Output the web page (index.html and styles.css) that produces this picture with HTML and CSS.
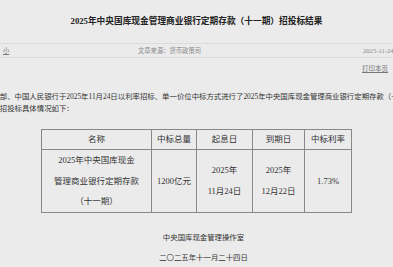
FILE: index.html
```html
<!DOCTYPE html>
<html lang="zh-CN">
<head>
<meta charset="utf-8">
<title>招投标结果</title>
<link rel="stylesheet" href="styles.css">
</head>
<body>
<div class="page">
  <h1 class="title">2025年中央国库现金管理商业银行定期存款（十一期）招投标结果</h1>
  <div class="meta">
    <span class="size"><a class="size-link">小</a></span>
    <span class="source">文章来源：货币政策司</span>
    <span class="date">2025-11-24</span>
  </div>
  <div class="print"><a class="print-link">打印本页</a></div>
  <p class="para">财政部、中国人民银行于2025年11月24日以利率招标、单一价位中标方式进行了2025年中央国库现金管理商业银行定期存款（十一期）招投标。<br>现将招投标具体情况如下：</p>
  <table class="result">
    <colgroup>
      <col class="c1"><col class="c2"><col class="c3"><col class="c4"><col class="c5">
    </colgroup>
    <thead>
      <tr><th>名称</th><th>中标总量</th><th>起息日</th><th>到期日</th><th>中标利率</th></tr>
    </thead>
    <tbody>
      <tr>
        <td>2025年中央国库现金<br>管理商业银行定期存款<br>（十一期）</td>
        <td>1200亿元</td>
        <td>2025年<br>11月24日</td>
        <td>2025年<br>12月22日</td>
        <td>1.73%</td>
      </tr>
    </tbody>
  </table>
  <div class="footer">
    <p class="sign">中央国库现金管理操作室</p>
    <p class="sign">二〇二五年十一月二十四日</p>
  </div>
</div>
</body>
</html>
```
FILE: styles.css
```css
html, body {
  margin: 0;
  padding: 0;
  background: #ebebeb;
  overflow: hidden;
}
.page {
  width: 393px;
  font-family: "Liberation Serif", "Noto Sans CJK SC", serif;
  color: #333;
}
.title {
  margin: 0;
  height: 43px;
  line-height: 43px;
  font-size: 8.7px;
  font-weight: 700;
  text-align: center;
  color: #222;
  border-bottom: 1px solid #dcdcdc;
}
.meta {
  display: grid;
  grid-template-columns: 138px 225px 100px;
  height: 13px;
  line-height: 13px;
  font-size: 6.3px;
  color: #888;
  border-bottom: 1px solid #dcdcdc;
  white-space: nowrap;
}
.size {
  padding-left: 3px;
}
.size-link {
  color: #777;
  text-decoration: underline;
}
.date {
  font-size: 6.6px;
}
.print {
  padding-top: 4px;
  padding-right: 5px;
  line-height: 13px;
  font-size: 6.5px;
  text-align: right;
}
.print-link {
  color: #777;
  text-decoration: underline;
}
.para {
  margin: 16px 0 0 -15px;
  font-size: 7.4px;
  line-height: 11.5px;
  white-space: nowrap;
  color: #333;
}
.result {
  margin: 15px auto 0;
  width: 311px;
  table-layout: fixed;
  border-collapse: collapse;
  font-size: 8.5px;
  color: #333;
}
.c1 { width: 110px; }
.c2 { width: 45px; }
.c3 { width: 56px; }
.c4 { width: 52px; }
.c5 { width: 47px; }
.result th, .result td {
  border: 1px solid #888;
  padding: 0;
  text-align: center;
  vertical-align: middle;
  font-weight: 400;
}
.result th {
  height: 19px;
  line-height: 19px;
}
.result td {
  height: 61px;
  line-height: 20.5px;
}
.footer {
  margin-top: 15px;
  padding-left: 14px;
  text-align: center;
  font-size: 7.4px;
  line-height: 20px;
}
.sign {
  margin: 0;
}
```
